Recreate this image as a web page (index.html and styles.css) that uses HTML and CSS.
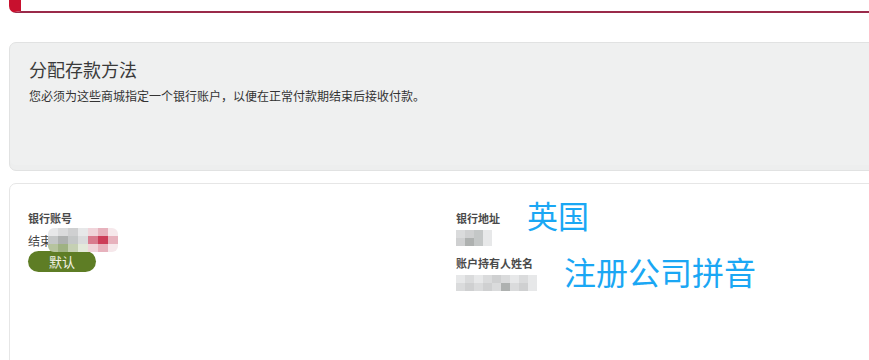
FILE: index.html
```html
<!DOCTYPE html>
<html lang="zh-CN">
<head>
  <meta charset="UTF-8">
  <meta name="viewport" content="width=device-width, initial-scale=1.0">
  <title>分配存款方法</title>
  <link rel="stylesheet" href="styles.css">
</head>
<body>
  <!-- Alert card, scrolled mostly out of view -->
  <div class="alert-card"></div>

  <!-- Intro panel -->
  <section class="intro-card">
    <h1 class="intro-title">分配存款方法</h1>
    <p class="intro-text">您必须为这些商城指定一个银行账户，以便在正常付款期结束后接收付款。</p>
  </section>

  <!-- Bank account card -->
  <section class="account-card">
    <div class="account-grid">
      <div class="field-col">
        <div class="field-label">银行账号</div>
        <div class="account-value">
          <span class="account-text">结束</span>
          <div class="mosaic mosaic-account">
            <i class="c1"></i><i class="c2"></i><i class="c3"></i><i class="c1"></i><i class="p1"></i><i class="p2"></i><i class="p0"></i>
            <i class="c4"></i><i class="c5"></i><i class="c4"></i><i class="c2"></i><i class="p3"></i><i class="p4"></i><i class="p2"></i>
            <i class="g1"></i><i class="g2"></i><i class="g3"></i><i class="g4"></i><i class="p1"></i><i class="p2"></i><i class="p0"></i>
          </div>
        </div>
        <span class="badge-default">默认</span>
      </div>

      <div class="field-col">
        <div class="field">
          <div class="field-label">银行地址</div>
          <div class="mosaic mosaic-short">
            <i class="c2"></i><i class="c3"></i><i class="c4"></i><i class="c1"></i>
            <i class="c3"></i><i class="c5"></i><i class="c4"></i><i class="c1"></i>
          </div>
          <span class="note note-country">英国</span>
        </div>
        <div class="field">
          <div class="field-label">账户持有人姓名</div>
          <div class="mosaic mosaic-long">
            <i class="c1"></i><i class="c2"></i><i class="c1"></i><i class="c2"></i><i class="c3"></i><i class="c2"></i><i class="c1"></i><i class="c2"></i><i class="c1"></i>
            <i class="c2"></i><i class="c3"></i><i class="c2"></i><i class="c3"></i><i class="c2"></i><i class="c5"></i><i class="c2"></i><i class="c3"></i><i class="c1"></i>
          </div>
          <span class="note note-name">注册公司拼音</span>
        </div>
      </div>
    </div>
  </section>
</body>
</html>
```

FILE: styles.css
```css
body {
  margin: 0;
  padding: 0 0 0 9px;
  font-family: "Microsoft YaHei", "Noto Sans CJK SC", sans-serif;
  background-color: #fff;
  color: #333;
  overflow: hidden;
}

/* Top alert card (only its bottom edge is visible) */
.alert-card {
  height: 11px;
  margin-right: -20px;
  background-color: #fff;
  border-left: 12px solid #c8102e;
  border-bottom: 2px solid #9a2a4a;
  border-bottom-left-radius: 7px;
}

/* Intro panel */
.intro-card {
  margin-top: 29px;
  margin-right: -20px;
  height: 129px;
  padding: 14px 19px 0;
  background-color: #eff0f0;
  border: 1px solid #e1e2e2;
  border-radius: 7px;
  box-sizing: border-box;
  box-shadow: inset 0 -5px 0 #edeeee;
}

.intro-title {
  margin: 0;
  font-size: 18px;
  font-weight: 400;
  line-height: 24px;
  color: #3a3a3a;
}

.intro-text {
  margin: 7px 0 0;
  font-size: 12px;
  line-height: 16px;
  color: #333;
}

/* Account card */
.account-card {
  margin-top: 12px;
  margin-right: -20px;
  height: 200px;
  padding: 27px 18px 0;
  border: 1px solid #e6e6e6;
  border-radius: 7px;
}

.account-grid {
  display: grid;
  grid-template-columns: 428px 1fr;
}

.field-col {
  display: flex;
  flex-direction: column;
  align-items: flex-start;
}

.field {
  position: relative;
  margin-bottom: 10px;
}

.field-label {
  font-size: 11px;
  line-height: 14px;
  font-weight: 700;
  color: #4a4a4a;
}

.account-value {
  position: relative;
  display: flex;
  align-items: center;
  margin-top: 8px;
  height: 16px;
}

.account-text {
  font-size: 12px;
  line-height: 16px;
  color: #444;
}

.badge-default {
  margin-top: 2px;
  width: 68px;
  height: 21px;
  line-height: 21px;
  text-align: center;
  font-size: 13px;
  color: #f2f2e6;
  background-color: #5e7d25;
  border-radius: 11px;
}

/* Pixelated privacy mosaics */
.mosaic {
  display: grid;
  filter: blur(0.6px);
}

.mosaic i {
  display: block;
}

.mosaic-account {
  position: absolute;
  left: 20px;
  top: -5px;
  grid-template-columns: repeat(7, 10px);
  grid-auto-rows: 8px;
  border-radius: 6px;
  overflow: hidden;
}

.mosaic-short {
  margin-top: 5px;
  grid-template-columns: repeat(4, 9px);
  grid-auto-rows: 8px;
}

.mosaic-long {
  margin-top: 5px;
  grid-template-columns: repeat(9, 9px);
  grid-auto-rows: 8px;
}

.c1 { background-color: #e7e8e9; }
.c2 { background-color: #dadbdc; }
.c3 { background-color: #cfd0d1; }
.c4 { background-color: #c4c7c7; }
.c5 { background-color: #aeb1b0; }
.p0 { background-color: #f6e8eb; }
.p1 { background-color: #f0d4da; }
.p2 { background-color: #e7b2bd; }
.p3 { background-color: #d97b8e; }
.p4 { background-color: #cc3d58; }
.g1 { background-color: #b6c49e; }
.g2 { background-color: #9fb282; }
.g3 { background-color: #c5d0b3; }
.g4 { background-color: #e3e9da; }

/* Blue annotations drawn over the card */
.note {
  position: absolute;
  font-family: "Microsoft YaHei", "Noto Sans CJK SC", sans-serif;
  color: #1aa7f4;
  white-space: nowrap;
}

.note-country {
  left: 71px;
  top: -14px;
  font-size: 31px;
  line-height: 36px;
}

.note-name {
  left: 108px;
  top: -4px;
  font-size: 32px;
  line-height: 38px;
}
```
